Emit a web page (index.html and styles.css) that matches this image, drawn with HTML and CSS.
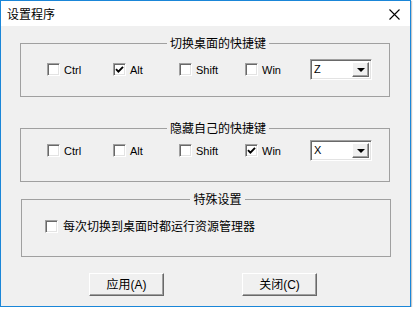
FILE: index.html
```html
<!DOCTYPE html>
<html lang="zh-CN">
<head>
<meta charset="utf-8">
<title>设置程序</title>
<link rel="stylesheet" href="styles.css">
</head>
<body>
<div class="window">
  <div class="titlebar">
    <span class="title">设置程序</span>
    <svg class="close" width="11" height="11" viewBox="0 0 11 11"><path d="M0.5 0.5 L10.5 10.5 M10.5 0.5 L0.5 10.5" stroke="#000" stroke-width="1.1" fill="none"/></svg>
  </div>
  <div class="content">
    <fieldset class="group g1">
      <legend>切换桌面的快捷键</legend>
      <div class="row">
        <label class="chk"><span class="box"></span><span class="lbl">Ctrl</span></label>
        <label class="chk"><span class="box"><svg width="9" height="9" viewBox="0 0 9 9"><path d="M1 4.2 L3.4 6.6 L8 1.8" stroke="#000" stroke-width="1.9" fill="none"/></svg></span><span class="lbl">Alt</span></label>
        <label class="chk"><span class="box"></span><span class="lbl">Shift</span></label>
        <label class="chk"><span class="box"></span><span class="lbl">Win</span></label>
        <div class="combo"><span class="val">Z</span><span class="drop"><span class="arrow"></span></span></div>
      </div>
    </fieldset>
    <fieldset class="group g2">
      <legend>隐藏自己的快捷键</legend>
      <div class="row">
        <label class="chk"><span class="box"></span><span class="lbl">Ctrl</span></label>
        <label class="chk"><span class="box"></span><span class="lbl">Alt</span></label>
        <label class="chk"><span class="box"></span><span class="lbl">Shift</span></label>
        <label class="chk"><span class="box"><svg width="9" height="9" viewBox="0 0 9 9"><path d="M1 4.2 L3.4 6.6 L8 1.8" stroke="#000" stroke-width="1.9" fill="none"/></svg></span><span class="lbl">Win</span></label>
        <div class="combo"><span class="val">X</span><span class="drop"><span class="arrow"></span></span></div>
      </div>
    </fieldset>
    <fieldset class="group g3">
      <legend>特殊设置</legend>
      <div class="row3">
        <label class="chk wide"><span class="box"></span><span class="lbl cn">每次切换到桌面时都运行资源管理器</span></label>
      </div>
    </fieldset>
    <div class="buttons">
      <button class="btn">应用(A)</button>
      <button class="btn">关闭(C)</button>
    </div>
  </div>
</div>
</body>
</html>
```

FILE: styles.css
```css
html, body {
  margin: 0;
  padding: 0;
  background: #ffffff;
}
body {
  font-family: "Liberation Sans", "Noto Sans CJK SC", sans-serif;
  font-size: 12px;
  color: #000;
}
.window {
  width: 409px;
  height: 305px;
  border: 1px solid #1a86d8;
  box-shadow: 1px 1px 1px rgba(0, 0, 0, 0.22);
  display: flex;
  flex-direction: column;
  background: #f0f0f0;
}
.titlebar {
  height: 25px;
  flex: none;
  background: #ffffff;
  display: flex;
  align-items: center;
  justify-content: space-between;
  padding: 0 10px 0 6px;
}
.title {
  font-family: "Noto Sans CJK SC", sans-serif;
  font-size: 12px;
  line-height: 16px;
}
.close {
  display: block;
  margin-top: 1px;
}
.content {
  flex: 1;
  padding: 9px 20px 0 19px;
}
.group {
  box-sizing: border-box;
  width: 370px;
  margin: 0;
  border: 1px solid #a0a0a0;
  padding: 8px 0 16px 26px;
  min-width: 0;
}
.group legend {
  margin: 0 auto;
  padding: 0 3px;
  height: 16px;
  line-height: 16px;
  font-family: "Noto Sans CJK SC", sans-serif;
  font-size: 12px;
}
.g2 {
  margin-top: 23px;
  padding-top: 4px;
  padding-bottom: 20px;
}
.g3 {
  margin-top: 9px;
  margin-left: 1px;
  padding: 11px 0 22px 23px;
}
.row {
  display: flex;
  align-items: center;
  height: 21px;
}
.row3 {
  display: flex;
  align-items: center;
  height: 16px;
}
.chk {
  width: 66px;
  display: flex;
  align-items: center;
  flex: none;
}
.chk.wide {
  width: auto;
}
.box {
  box-sizing: border-box;
  width: 13px;
  height: 13px;
  flex: none;
  background: #ffffff;
  border: 1px solid;
  border-color: #a0a0a0 #ffffff #ffffff #a0a0a0;
  box-shadow: inset 1px 1px 0 #696969, inset -1px -1px 0 #e3e3e3;
  display: flex;
  align-items: center;
  justify-content: center;
  margin-right: 4px;
}
.box svg {
  display: block;
}
.lbl {
  font-size: 11px;
  line-height: 14px;
}
.lbl.cn {
  font-family: "Noto Sans CJK SC", sans-serif;
  font-size: 12px;
  line-height: 16px;
  margin-left: 1px;
}
.combo {
  box-sizing: border-box;
  width: 62px;
  height: 21px;
  margin-left: -1px;
  background: #ffffff;
  border: 1px solid;
  border-color: #a0a0a0 #ffffff #ffffff #a0a0a0;
  box-shadow: inset 1px 1px 0 #696969, inset -1px -1px 0 #e3e3e3;
  display: flex;
  align-items: stretch;
  padding: 2px;
}
.val {
  flex: 1;
  font-size: 11px;
  line-height: 15px;
  padding-left: 1px;
}
.drop {
  box-sizing: border-box;
  width: 17px;
  background: #f0f0f0;
  border: 1px solid;
  border-color: #ffffff #696969 #696969 #ffffff;
  box-shadow: inset -1px -1px 0 #a0a0a0;
  display: flex;
  align-items: center;
  justify-content: center;
}
.arrow {
  width: 0;
  height: 0;
  border-left: 4px solid transparent;
  border-right: 4px solid transparent;
  border-top: 4px solid #000;
  margin-top: 1px;
}
.buttons {
  display: flex;
  margin-top: 16px;
  padding-left: 69px;
  gap: 78px;
}
.btn {
  box-sizing: border-box;
  width: 75px;
  height: 23px;
  margin: 0;
  padding: 0;
  background: #f0f0f0;
  border: 1px solid;
  border-color: #ffffff #696969 #696969 #ffffff;
  box-shadow: inset -1px -1px 0 #a0a0a0;
  font-family: "Liberation Sans", "Noto Sans CJK SC", sans-serif;
  font-size: 12px;
  color: #000;
  line-height: 16px;
}
```
